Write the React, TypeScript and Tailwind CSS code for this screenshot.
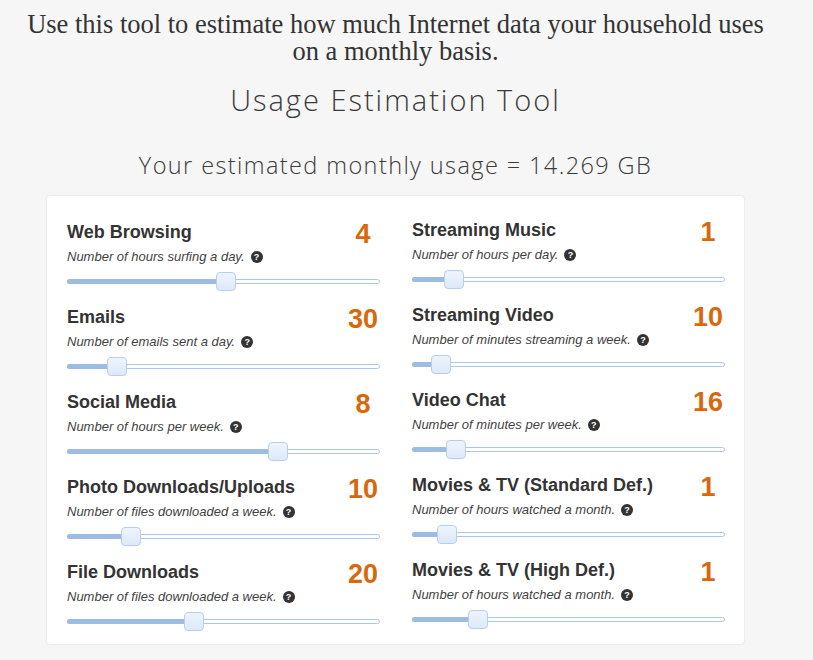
import React from 'react';

type Item = { title: string; desc: string; value: number; pos: number };

const LEFT: Item[] = [
  { title: 'Web Browsing', desc: 'Number of hours surfing a day.', value: 4, pos: 159 },
  { title: 'Emails', desc: 'Number of emails sent a day.', value: 30, pos: 50 },
  { title: 'Social Media', desc: 'Number of hours per week.', value: 8, pos: 211 },
  { title: 'Photo Downloads/Uploads', desc: 'Number of files downloaded a week.', value: 10, pos: 64 },
  { title: 'File Downloads', desc: 'Number of files downloaded a week.', value: 20, pos: 127 },
];

const RIGHT: Item[] = [
  { title: 'Streaming Music', desc: 'Number of hours per day.', value: 1, pos: 42 },
  { title: 'Streaming Video', desc: 'Number of minutes streaming a week.', value: 10, pos: 29 },
  { title: 'Video Chat', desc: 'Number of minutes per week.', value: 16, pos: 44 },
  { title: 'Movies & TV (Standard Def.)', desc: 'Number of hours watched a month.', value: 1, pos: 35 },
  { title: 'Movies & TV (High Def.)', desc: 'Number of hours watched a month.', value: 1, pos: 66 },
];

const Slider: React.FC<{ pos: number }> = ({ pos }) => (
  <div className="relative h-[20px] w-[313px]">
    {/* track */}
    <div className="absolute left-0 right-0 top-[7px] h-[5px] rounded-[3px] border border-[#abc7e8] bg-white" />
    <div className="absolute left-0 top-[7px] h-[5px] rounded-l-[3px] bg-[#9dbce2]" style={{ width: pos }} />
    {/* handle */}
    <div
      className="absolute top-0 h-[19px] w-[20px] rounded-[4px] border border-[#b7cfec] bg-gradient-to-b from-[#eef4fd] to-[#dde9f9]"
      style={{ left: pos - 10 }}
    />
  </div>
);

const Row: React.FC<{ item: Item }> = ({ item }) => (
  <div className="h-[85px]">
    <div className="flex h-[26px] w-[313px] items-center justify-between">
      <span className="text-[18px] font-bold leading-[20px] text-[#333]">{item.title}</span>
      <span className="-mr-[5px] mt-[4px] w-[44px] text-center text-[27px] font-bold leading-[26px] text-[#d9680c]">
        {item.value}
      </span>
    </div>
    <div className="mt-[4px] flex h-[16px] items-center gap-[6px]">
      <span className="text-[13px] italic leading-[16px] text-[#3f3f3f]">{item.desc}</span>
      <span className="flex h-[12px] w-[12px] items-center justify-center rounded-full bg-[#333] text-[9px] font-bold leading-none text-white">
        ?
      </span>
    </div>
    <div className="mt-[7px]">
      <Slider pos={item.pos} />
    </div>
  </div>
);

export default function App() {
  return (
    <div className="min-h-[660px] w-full bg-[#f6f6f6] font-['Liberation_Sans',Arial,sans-serif]">
      <div className="w-[791px]">
        <p className="pt-[11px] text-center font-['Liberation_Serif','Times_New_Roman',serif] text-[26.5px] leading-[27px] text-[#333]">
          Use this tool to estimate how much Internet data your household uses
          <br />
          on a monthly basis.
        </p>
        <h1 className="mt-[18px] text-center font-['Open_Sans',sans-serif] text-[29px] font-light leading-[34px] tracking-[2px] text-[#3a3a3a]">
          Usage Estimation Tool
        </h1>
        <p className="mt-[33px] text-center font-['Open_Sans',sans-serif] text-[23.5px] font-light leading-[30px] tracking-[1.4px] text-[#3a3a3a]">
          Your estimated monthly usage = 14.269 GB
        </p>
        <div className="ml-[46px] mt-[15px] flex h-[450px] w-[699px] gap-[32px] rounded-[4px] border border-[#ececec] bg-white pl-[20px] pt-[23px]">
          <div className="flex flex-col">
            {LEFT.map((it) => (
              <Row key={it.title} item={it} />
            ))}
          </div>
          <div className="-mt-[2px] flex flex-col">
            {RIGHT.map((it) => (
              <Row key={it.title} item={it} />
            ))}
          </div>
        </div>
      </div>
    </div>
  );
}
